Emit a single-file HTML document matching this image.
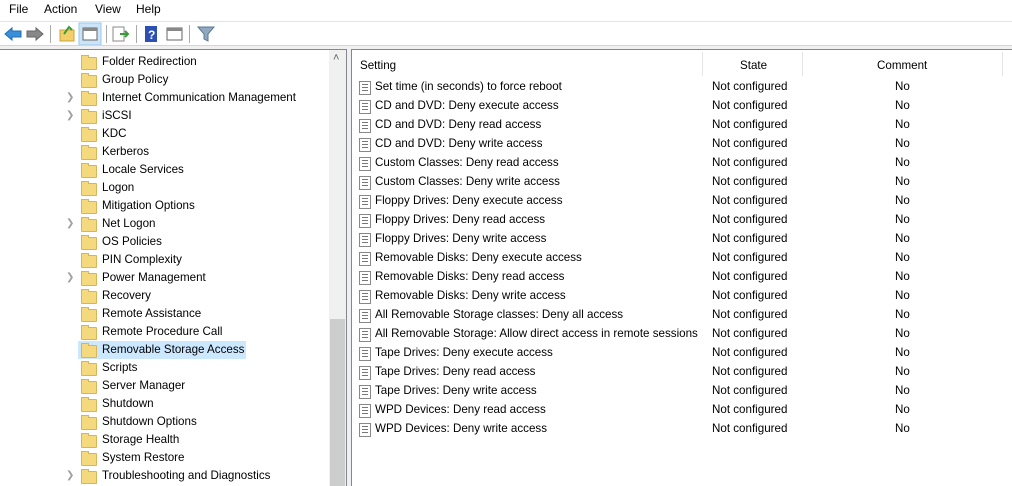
<!DOCTYPE html><html><head><style>
body{margin:0;width:1012px;height:486px;background:#fff;font-family:"Liberation Sans",sans-serif;font-size:11.6px;color:#000;position:relative;overflow:hidden}
.a{position:absolute;white-space:nowrap}
.menu span{position:absolute;top:2px;font-size:12px}
.fold{position:absolute;width:14px;height:11px;background:#f5d97e;border:1px solid #d9b55a;border-radius:1px}
.fold:before{content:"";position:absolute;left:-1px;top:-3px;width:6px;height:2px;background:#f5d97e;border:1px solid #d9b55a;border-bottom:none}
.chev{position:absolute;color:#a0a0a0;font-size:10px}
.ic{position:absolute;width:10px;height:12px;border:1px solid #888;background:#fff}
.ic:after{content:"";position:absolute;left:2px;top:2px;width:6px;height:7px;background:repeating-linear-gradient(#777 0 1px,transparent 1px 3px)}
</style></head><body>
<div class="menu"><span style="left:9px">File</span><span style="left:44px">Action</span><span style="left:95px">View</span><span style="left:136px">Help</span></div>
<div class="a" style="left:0;top:21px;width:1012px;height:1px;background:#e3e3e3"></div>
<svg class="a" style="left:0;top:22px" width="230" height="24">
<path d="M5 12 L12 6 V9 H21 V15 H12 V18 Z" fill="#3b8fd6" stroke="#1d6fb5"/>
<path d="M43 12 L36 6 V9 H27 V15 H36 V18 Z" fill="#888" stroke="#666"/>
<line x1="50.5" y1="3" x2="50.5" y2="21" stroke="#aaa"/>
<rect x="60" y="8" width="14" height="11" fill="#f3cf6a" stroke="#c9a43f"/><path d="M64 12 L69 5 L72 8" stroke="#3a9b3a" stroke-width="2" fill="none"/>
<rect x="79" y="1" width="22" height="22" fill="#cce4f7" stroke="#99c9ef"/>
<rect x="83" y="6" width="14" height="12" fill="#fff" stroke="#666"/><rect x="83" y="6" width="14" height="3" fill="#888"/>
<line x1="106.5" y1="3" x2="106.5" y2="21" stroke="#aaa"/>
<rect x="113" y="5" width="11" height="14" fill="#fff" stroke="#888"/><path d="M120 12 H128 M125 9 L128 12 L125 15" stroke="#3a9b3a" stroke-width="2" fill="none"/>
<line x1="136.5" y1="3" x2="136.5" y2="21" stroke="#aaa"/>
<rect x="145" y="4" width="12" height="16" fill="#2b4fb4"/><text x="148" y="17" fill="#fff" font-size="12" font-weight="bold">?</text>
<rect x="167" y="6" width="15" height="12" fill="#fff" stroke="#666"/><rect x="167" y="6" width="15" height="3" fill="#888"/>
<line x1="189.5" y1="3" x2="189.5" y2="21" stroke="#aaa"/>
<path d="M198 5 H214 L208 12 V19 L204 17 V12 Z" fill="#8fa9c0" stroke="#5a7890"/>
</svg>
<div class="a" style="left:0;top:45px;width:1012px;height:1px;background:#d5d5d5"></div>
<div class="a" style="left:0;top:46px;width:1012px;height:3px;background:#f0f0f0"></div>
<div class="a" style="left:0;top:49px;width:347px;height:437px;border-top:1px solid #828790;border-right:1px solid #828790;box-sizing:border-box"></div>
<div class="a" style="left:347px;top:49px;width:4px;height:437px;background:#f0f0f0"></div>
<div class="a" style="left:329px;top:50px;width:17px;height:436px;background:#f0f0f0"></div>
<div class="a" style="left:330px;top:319px;width:15px;height:167px;background:#cdcdcd"></div>
<div class="a" style="left:333px;top:52px;color:#606060;font-size:11px">&#x2c4;</div>
<div class="a" style="left:78px;top:341px;width:168px;height:18px;background:#cce8ff"></div>
<div id="tree"></div>
<div class="a" style="left:351px;top:49px;width:661px;height:437px;border-top:1px solid #828790;border-left:1px solid #828790;box-sizing:border-box"></div>
<div class="a" style="left:360px;top:59px">Setting</div>
<div class="a" style="left:740px;top:59px">State</div>
<div class="a" style="left:877px;top:59px">Comment</div>
<div class="a" style="left:702px;top:52px;width:1px;height:24px;background:#e5e5e5"></div>
<div class="a" style="left:802px;top:52px;width:1px;height:24px;background:#e5e5e5"></div>
<div class="a" style="left:1002px;top:52px;width:1px;height:24px;background:#e5e5e5"></div>
<div id="rows"></div>
<script>
var t=[["Folder Redirection",0],["Group Policy",0],["Internet Communication Management",1],["iSCSI",1],["KDC",0],["Kerberos",0],["Locale Services",0],["Logon",0],["Mitigation Options",0],["Net Logon",1],["OS Policies",0],["PIN Complexity",0],["Power Management",1],["Recovery",0],["Remote Assistance",0],["Remote Procedure Call",0],["Removable Storage Access",0],["Scripts",0],["Server Manager",0],["Shutdown",0],["Shutdown Options",0],["Storage Health",0],["System Restore",0],["Troubleshooting and Diagnostics",1]];
var h="";t.forEach(function(r,i){var y=55+i*18;
if(r[1])h+='<div class="chev" style="left:66px;top:'+(y+1)+'px">&#x276F;</div>';
h+='<div class="fold" style="left:81px;top:'+(y+2)+'px"></div><div class="a" style="left:102px;top:'+y+'px">'+r[0]+'</div>';});
document.getElementById("tree").innerHTML=h;
var s=["Set time (in seconds) to force reboot","CD and DVD: Deny execute access","CD and DVD: Deny read access","CD and DVD: Deny write access","Custom Classes: Deny read access","Custom Classes: Deny write access","Floppy Drives: Deny execute access","Floppy Drives: Deny read access","Floppy Drives: Deny write access","Removable Disks: Deny execute access","Removable Disks: Deny read access","Removable Disks: Deny write access","All Removable Storage classes: Deny all access","All Removable Storage: Allow direct access in remote sessions","Tape Drives: Deny execute access","Tape Drives: Deny read access","Tape Drives: Deny write access","WPD Devices: Deny read access","WPD Devices: Deny write access"];
h="";s.forEach(function(r,i){var y=80+i*19;
h+='<div class="ic" style="left:359px;top:'+(y+1)+'px"></div><div class="a" style="left:375px;top:'+y+'px">'+r+'</div><div class="a" style="left:712px;top:'+y+'px">Not configured</div><div class="a" style="left:895px;top:'+y+'px">No</div>';});
document.getElementById("rows").innerHTML=h;
</script>
</body></html>
